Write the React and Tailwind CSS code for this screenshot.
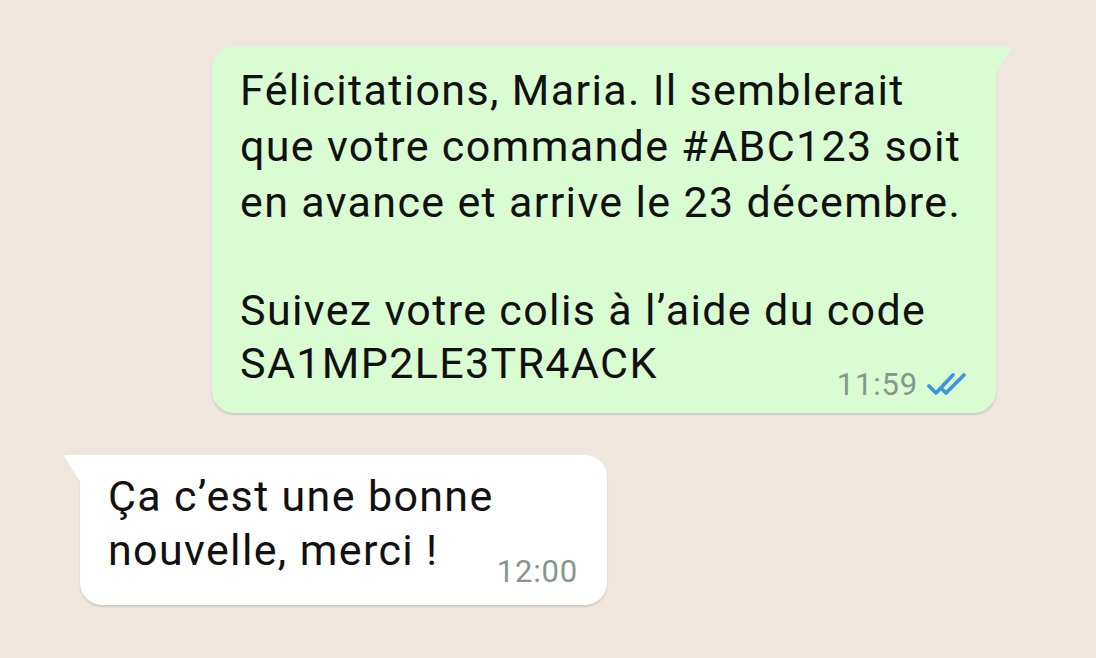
import React from "react";

function DoubleCheck() {
  return (
    <svg width="44" height="26" viewBox="0 0 44 26" fill="none" className="shrink-0">
      <path d="M3 14 L10 21 L27 3" stroke="#3d94df" strokeWidth="3.8" strokeLinecap="round" strokeLinejoin="round" />
      <path d="M17 18 L20 21 L38 3" stroke="#3d94df" strokeWidth="3.8" strokeLinecap="round" strokeLinejoin="round" />
    </svg>
  );
}

export default function App() {
  return (
    <div
      className="w-[1096px] h-[658px] bg-[#efe7dd] flex flex-col overflow-hidden"
      style={{ fontFamily: "Roboto, 'Liberation Sans', sans-serif" }}
    >
      <div className="relative ml-[212px] mt-[47px] w-[784px] h-[366px] bg-[#dafcd2] rounded-[22px] rounded-tr-none shadow-[0_2px_2px_rgba(0,0,0,0.12)] pl-[28px] pr-[28px] pt-[15px]">
        <svg className="absolute top-0 right-[-17px]" width="18" height="30" viewBox="0 0 18 30">
          <path d="M0 0 H14 Q18 0 16 3 L0 28 Z" fill="#dafcd2" />
        </svg>
        <div className="text-[43px] leading-[56px] text-[#111111] tracking-[1.35px]">
          <div>Félicitations, Maria. Il semblerait</div>
          <div>que votre commande #ABC123 soit</div>
          <div>en avance et arrive le 23 décembre.</div>
          <div className="h-[54px]"></div>
          <div className="leading-[53px]">Suivez votre colis à l’aide du code</div>
          <div className="flex items-end justify-between leading-[53px]">
            <span>SA1MP2LE3TR4ACK</span>
            <span className="flex items-center gap-[8px] mb-[-12px] mr-[-2px]">
              <span className="text-[31px] leading-[34px] tracking-[0.8px] text-[#86978a]">11:59</span>
              <DoubleCheck />
            </span>
          </div>
        </div>
      </div>

      <div className="relative ml-[80px] mt-[42px] w-[527px] h-[150px] bg-white rounded-[22px] rounded-tl-none shadow-[0_2px_2px_rgba(0,0,0,0.12)] pl-[28px] pr-[28px] pt-[14px]">
        <svg className="absolute top-0 left-[-17px]" width="18" height="30" viewBox="0 0 18 30">
          <path d="M18 0 H4 Q0 0 2 3 L18 28 Z" fill="#ffffff" />
        </svg>
        <div className="text-[43px] leading-[54px] text-[#111111] tracking-[1.35px]">
          <div>Ça c’est une bonne</div>
          <div className="flex items-end justify-between">
            <span>nouvelle, merci !</span>
            <span className="text-[31px] leading-[34px] tracking-[0.8px] text-[#86978a] mb-[-12px] mr-[1px]">12:00</span>
          </div>
        </div>
      </div>
    </div>
  );
}
